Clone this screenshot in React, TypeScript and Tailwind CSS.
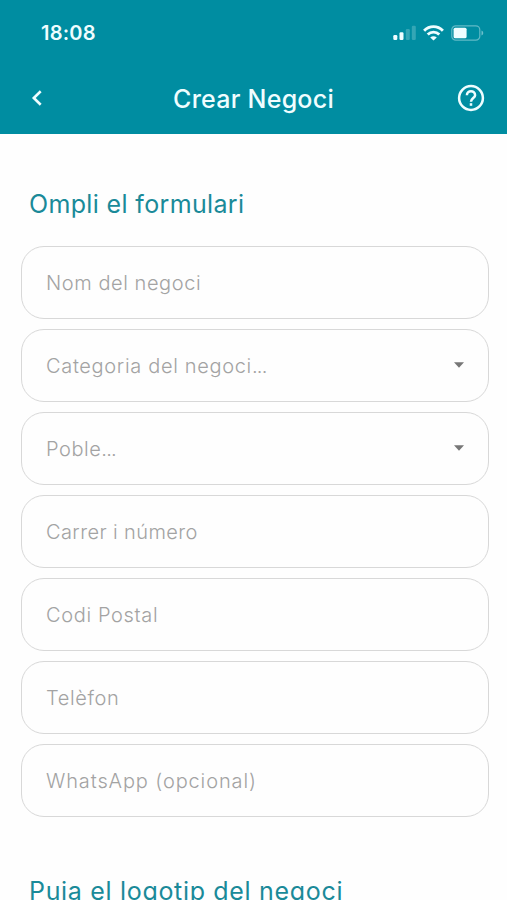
import React from 'react';

const fields = [
  { id: 1, label: 'Nom del negoci', select: false, tracking: 'tracking-[0.57px]' },
  { id: 2, label: 'Categoria del negoci', select: true, tracking: 'tracking-[0.67px]' },
  { id: 3, label: 'Poble', select: true, tracking: 'tracking-[0.55px]' },
  { id: 4, label: 'Carrer i número', select: false, tracking: 'tracking-[0.4px]' },
  { id: 5, label: 'Codi Postal', select: false, tracking: 'tracking-[0.65px]' },
  { id: 6, label: 'Telèfon', select: false, tracking: 'tracking-[0.62px]' },
  { id: 7, label: 'WhatsApp (opcional)', select: false, tracking: 'tracking-[0.88px]' },
];

const StatusBar: React.FC = () => (
  <div className="flex h-[66px] items-center justify-between pl-[41px] pr-[23px]">
    <span className="text-[20px] font-semibold leading-6 tracking-[0.2px]">18:08</span>
    <div className="flex items-center gap-[7px]">
      {/* Signal */}
      <svg width="23" height="16" viewBox="0 0 23 16" fill="currentColor">
        <rect x="0.3" y="10" width="4" height="5" rx="1.2" />
        <rect x="6.5" y="7.2" width="4" height="7.8" rx="1.2" />
        <rect x="12.8" y="4" width="4" height="11" rx="1.2" opacity="0.22" />
        <rect x="18.8" y="0.8" width="4" height="14.2" rx="1.2" opacity="0.22" />
      </svg>
      {/* Wifi */}
      <svg width="21" height="16" viewBox="0 0 21 16" fill="none" stroke="currentColor" strokeWidth="2.9">
        <path d="M1.1 5.7C6.5 0.3 14.5 0.3 19.9 5.7" />
        <path d="M4.7 9.5C8 6.3 13 6.3 16.3 9.5" />
        <path d="M10.5 15.6L7.2 12.4C9.2 10.8 11.8 10.8 13.8 12.4Z" fill="currentColor" stroke="none" />
      </svg>
      {/* Battery */}
      <svg width="33" height="16" viewBox="0 0 33 16">
        <rect x="0.8" y="0.8" width="28" height="14.4" rx="4" fill="none" stroke="currentColor" strokeOpacity="0.4" strokeWidth="1.2" />
        <rect x="2.6" y="2.7" width="13" height="10.6" rx="1.6" fill="currentColor" />
        <path d="M30.5 5.5C32.8 6.3 32.8 9.7 30.5 10.5Z" fill="currentColor" fillOpacity="0.45" />
      </svg>
    </div>
  </div>
);

const App: React.FC = () => {
  return (
    <div className="h-[900px] w-[507px] overflow-hidden bg-[#fefefe] font-['Inter',sans-serif]">
      <header className="h-[134px] bg-[#008da1] text-[#effdff]">
        <StatusBar />
        <div className="grid h-16 grid-cols-[1fr_auto_1fr] items-center pl-[29px] pr-[22px]">
          <button className="flex w-7" aria-label="Enrere">
            <svg width="16" height="18" viewBox="0 0 16 18" fill="none" stroke="currentColor" strokeWidth="2.6">
              <path d="M11.7 2.2L4.8 9L11.7 15.8" />
            </svg>
          </button>
          <h1 className="mr-[7px] whitespace-nowrap pt-0.5 text-[25px] font-medium leading-8 tracking-[0.25px]">Crear Negoci</h1>
          <button className="justify-self-end" aria-label="Ajuda">
            <svg width="28" height="28" viewBox="0 0 28 28" fill="none" stroke="currentColor" strokeWidth="2.5">
              <circle cx="14" cy="14" r="11.9" />
              <path d="M9.9 11.2C9.9 5.8 18.1 5.8 18.1 11.2C18.1 14 14 14.2 14 17.7" />
              <path d="M14 19.2V21.8" />
            </svg>
          </button>
        </div>
      </header>

      <main className="pl-[21px] pr-[18px] pt-[54px]">
        <h2 className="pl-2 text-[25px] leading-8 tracking-[0.35px] text-[#1a8a99]">Ompli el formulari</h2>
        <div className="mt-[26px] flex flex-col gap-2.5">
          {fields.map(field => (
            <div
              key={field.id}
              className="flex h-[73px] items-center justify-between rounded-[23px] border border-[#d8d8d8] pl-6 pr-6"
            >
              <span className={`whitespace-nowrap text-[20px] font-light leading-6 text-[#a3a3a3] ${field.tracking}`}>
                {field.label}
                {field.select && <span className="tracking-[-0.8px]">...</span>}
              </span>
              {field.select && (
                <svg width="10" height="6" viewBox="0 0 10 6" className="mb-0.5" fill="#777777">
                  <path d="M0 0.3H10L5 5.7Z" />
                </svg>
              )}
            </div>
          ))}
        </div>
        <h2 className="mt-[58px] whitespace-nowrap pl-2 text-[25px] leading-8 tracking-[0.68px] text-[#1a8a99]">
          Puja el logotip del negoci
        </h2>
      </main>
    </div>
  );
};

export default App;
